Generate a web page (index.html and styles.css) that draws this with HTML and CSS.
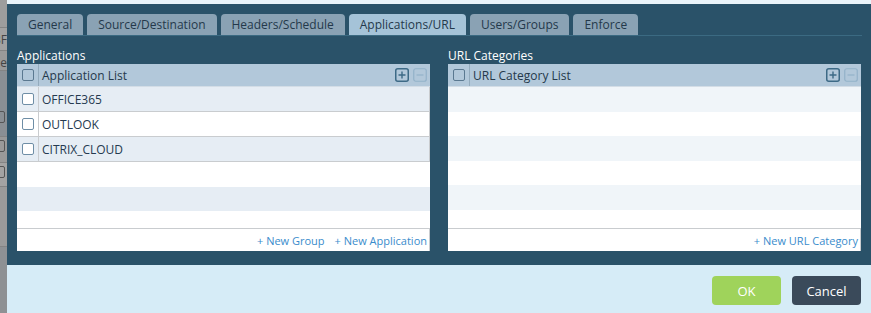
FILE: index.html
```html
<!DOCTYPE html>
<html>
<head>
<meta charset="utf-8">
<link rel="stylesheet" href="styles.css">
</head>
<body>
<div class="backdrop">
  <div class="bd-band bd-a"></div>
  <div class="bd-band bd-b"><span class="bd-text">BF</span></div>
  <div class="bd-band bd-c"><span class="bd-text">e</span></div>
  <div class="bd-band bd-d"><span class="bd-box"></span></div>
  <div class="bd-band bd-e"><span class="bd-box"></span></div>
  <div class="bd-band bd-f"><span class="bd-box"></span></div>
  <div class="bd-band bd-g"></div>
  <div class="bd-band bd-h"></div>
</div>
<div class="modal">
  <div class="modal-top"></div>
  <div class="modal-body">
    <div class="tabs">
      <div class="tab">General</div>
      <div class="tab">Source/Destination</div>
      <div class="tab">Headers/Schedule</div>
      <div class="tab active">Applications/URL</div>
      <div class="tab">Users/Groups</div>
      <div class="tab">Enforce</div>
    </div>
    <div class="panels">
      <div class="panel">
        <div class="panel-title">Applications</div>
        <div class="grid">
          <div class="grid-head">
            <div class="cb-cell"><span class="cb"></span></div>
            <div class="head-label">Application List</div>
            <div class="tools">
              <svg class="tool" width="14" height="14" viewBox="0 0 14 14"><rect x="0.75" y="0.75" width="12.5" height="12.5" rx="2" fill="none" stroke="#3d6a86" stroke-width="1.5"/><path d="M7 3.5v7M3.5 7h7" stroke="#3d6a86" stroke-width="1.4"/></svg>
              <svg class="tool" width="14" height="14" viewBox="0 0 14 14"><rect x="0.75" y="0.75" width="12.5" height="12.5" rx="2" fill="none" stroke="#93b2c9" stroke-width="1.2"/><path d="M3.5 7h7" stroke="#93b2c9" stroke-width="1.2"/></svg>
            </div>
          </div>
          <div class="grid-body">
            <div class="row data odd"><div class="cb-cell"><span class="cb"></span></div><div class="cell">OFFICE365</div></div>
            <div class="row data"><div class="cb-cell"><span class="cb"></span></div><div class="cell">OUTLOOK</div></div>
            <div class="row data odd"><div class="cb-cell"><span class="cb"></span></div><div class="cell">CITRIX_CLOUD</div></div>
            <div class="row empty"></div>
            <div class="row empty odd"></div>
            <div class="row empty"></div>
          </div>
          <div class="grid-foot">
            <a class="link">+ New Group</a>
            <a class="link">+ New Application</a>
          </div>
        </div>
      </div>
      <div class="panel">
        <div class="panel-title">URL Categories</div>
        <div class="grid">
          <div class="grid-head">
            <div class="cb-cell"><span class="cb"></span></div>
            <div class="head-label">URL Category List</div>
            <div class="tools">
              <svg class="tool" width="14" height="14" viewBox="0 0 14 14"><rect x="0.75" y="0.75" width="12.5" height="12.5" rx="2" fill="none" stroke="#3d6a86" stroke-width="1.5"/><path d="M7 3.5v7M3.5 7h7" stroke="#3d6a86" stroke-width="1.4"/></svg>
              <svg class="tool" width="14" height="14" viewBox="0 0 14 14"><rect x="0.75" y="0.75" width="12.5" height="12.5" rx="2" fill="none" stroke="#93b2c9" stroke-width="1.2"/><path d="M3.5 7h7" stroke="#93b2c9" stroke-width="1.2"/></svg>
            </div>
          </div>
          <div class="grid-body">
            <div class="row empty light"></div>
            <div class="row empty"></div>
            <div class="row empty light"></div>
            <div class="row empty"></div>
            <div class="row empty light"></div>
            <div class="row empty"></div>
          </div>
          <div class="grid-foot">
            <a class="link">+ New URL Category</a>
          </div>
        </div>
      </div>
    </div>
  </div>
  <div class="modal-footer">
    <button class="btn ok">OK</button>
    <button class="btn cancel">Cancel</button>
  </div>
</div>
</body>
</html>
```

FILE: styles.css
```css
* { box-sizing: border-box; }
html, body { margin: 0; padding: 0; }
body {
  display: flex;
  width: 871px;
  height: 313px;
  overflow: hidden;
  font-family: "Open Sans", "Noto Sans", sans-serif;
  font-size: 12px;
  color: #263a4c;
  background: #9c9c9c;
}
.backdrop {
  width: 7px;
  flex: none;
  display: flex;
  flex-direction: column;
  overflow: hidden;
}
.bd-band { position: relative; overflow: hidden; border-bottom: 1px solid #848484; }
.bd-a { height: 28px; background: #9d9d9d; }
.bd-b { height: 23px; background: #a2a2a2; }
.bd-c { height: 20px; background: #9a9a9a; }
.bd-d { height: 66px; background: #8a8f94; }
.bd-e { height: 26px; background: #999; }
.bd-f { height: 24px; background: #a3a3a3; }
.bd-g { height: 60px; background: #9a9a9a; }
.bd-h { flex: 1; background: #8e9194; border-bottom: none; }
.bd-text { position: absolute; right: 0; top: 3px; font-size: 12px; color: #444; }
.bd-box { position: absolute; right: 2px; top: 3px; width: 10px; height: 12px; border: 1px solid #555; border-radius: 2px; }
.bd-d .bd-box { top: 40px; }

.modal { flex: 1; display: flex; flex-direction: column; }
.modal-top { height: 4px; background: #e9f3f9; }
.modal-body {
  height: 261px;
  background: #2a5269;
  padding: 10px 10px 0 10px;
}
.tabs {
  display: flex;
  gap: 4px;
  border-bottom: 1px solid #3b6a82;
  margin-right: -1px;
}
.tab {
  height: 21px;
  line-height: 21px;
  padding: 0 11px;
  background: #8aa2b4;
  border-radius: 4px 4px 0 0;
  color: #24394b;
  font-size: 12px;
}
.tab.active { background: #a5c3d8; }

.panels {
  display: flex;
  gap: 18px;
  margin-top: 12px;
}
.panel { width: 413px; }
.panel-title {
  color: #fff;
  font-size: 12px;
  line-height: 16px;
  height: 16px;
}
.grid { background: #fff; }
.grid-head {
  display: flex;
  align-items: center;
  height: 23px;
  background: #b2c8da;
  border-bottom: 1px solid #d3dde6;
}
.cb-cell {
  width: 22px;
  height: 100%;
  flex: none;
  display: flex;
  align-items: center;
  justify-content: center;
  border-right: 1px solid #93abbd;
}
.cb {
  display: block;
  width: 12px;
  height: 12px;
  border: 1px solid #5a7890;
  border-radius: 2px;
  background: transparent;
}
.row .cb { background: #fff; border-color: #6e8ea6; }
.head-label { flex: 1; padding-left: 3px; color: #24394b; }
.tools { display: flex; gap: 4px; padding-right: 3px; }
.tool { display: block; }

.grid-body { height: 141px; overflow: hidden; }
.row { display: flex; height: 25px; }
.row.data { border-bottom: 1px solid #c9cccf; border-right: 1px solid #c9cccf; }
.row.data .cb-cell { border-right-color: #c9cccf; }
.row.odd { background: #e6edf4; }
.row.light { background: #f0f5f9; }
.row.empty { height: 24.5px; }
.cell { padding-left: 3px; line-height: 25px; color: #253a50; }

.grid-foot {
  height: 23px;
  border-top: 1px solid #c9cccf;
  border-right: 1px solid #c9cccf;
  display: flex;
  justify-content: flex-end;
  align-items: center;
  gap: 10px;
  padding-right: 2px;
}
.link { color: #3a8ccc; font-size: 11px; }

.modal-footer {
  flex: 1;
  background: #d6ecf7;
  display: flex;
  justify-content: flex-end;
  align-items: center;
  gap: 11px;
  padding-right: 10px;
  padding-top: 3px;
}
.btn {
  width: 69px;
  height: 29px;
  border: none;
  border-radius: 4px;
  color: #fff;
  font-family: "Open Sans", "Noto Sans", sans-serif;
  font-size: 13px;
}
.btn.ok { background: #9fd35b; }
.btn.cancel { background: #3a4a5a; }
```
